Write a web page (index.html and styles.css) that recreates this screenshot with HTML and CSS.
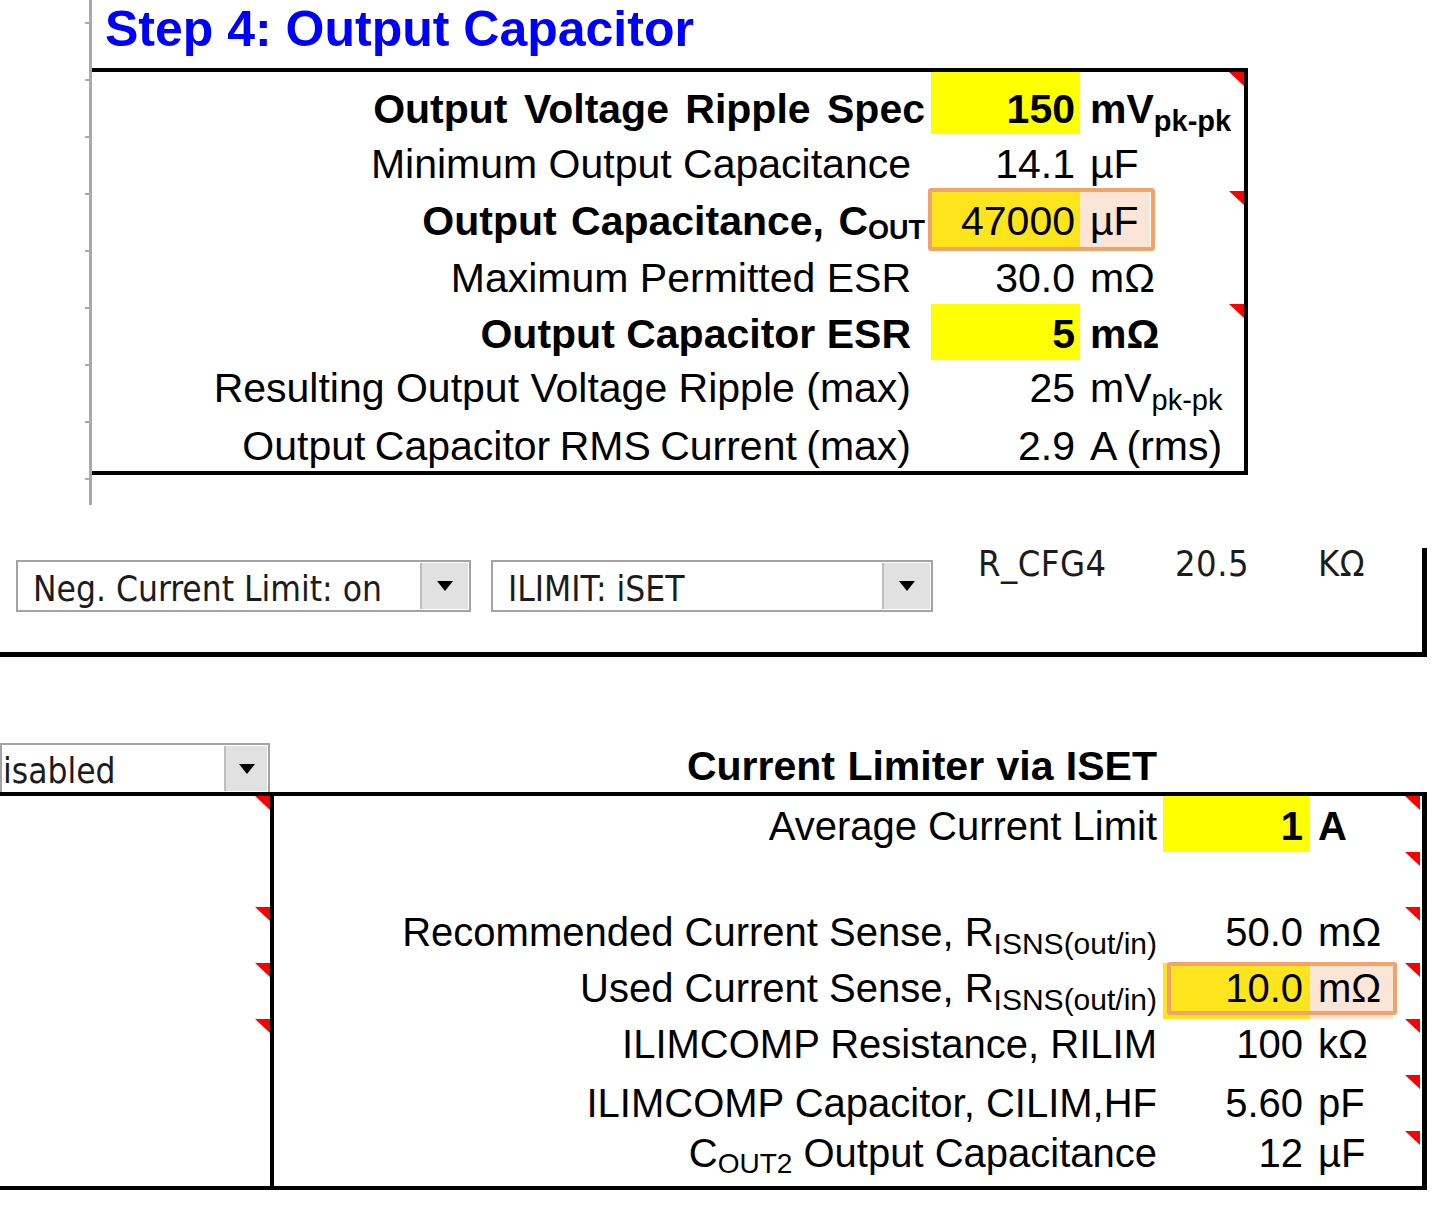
FILE: index.html
```html
<!DOCTYPE html>
<html lang="en">
<head>
<meta charset="utf-8">
<title>Output Capacitor</title>
<link rel="stylesheet" href="styles.css">
</head>
<body>
<section class="step">
  <div class="sheet">
    <h1 class="step-title">Step 4: Output Capacitor</h1>
    <div class="calc">
      <div class="row r1">
        <div class="lbl b wide">Output Voltage Ripple Spec</div>
        <div class="val in b">150</div>
        <div class="unit b">mV<span class="sub">pk-pk</span><i class="cm"></i></div>
      </div>
      <div class="row r2">
        <div class="lbl">Minimum Output Capacitance</div>
        <div class="val">14.1</div>
        <div class="unit">µF</div>
      </div>
      <div class="row r3">
        <div class="lbl b wide">Output Capacitance, C<span class="sc">OUT</span></div>
        <div class="val sel">47000</div>
        <div class="unit sel-tint">µF<i class="cm"></i></div>
        <span class="sel-box"></span>
      </div>
      <div class="row r4">
        <div class="lbl">Maximum Permitted ESR</div>
        <div class="val">30.0</div>
        <div class="unit">mΩ</div>
      </div>
      <div class="row r5">
        <div class="lbl b">Output Capacitor ESR</div>
        <div class="val in b">5</div>
        <div class="unit b">mΩ<i class="cm"></i></div>
      </div>
      <div class="row r6">
        <div class="lbl">Resulting Output Voltage Ripple (max)</div>
        <div class="val">25</div>
        <div class="unit">mV<span class="sub">pk-pk</span></div>
      </div>
      <div class="row r7">
        <div class="lbl">Output Capacitor RMS Current (max)</div>
        <div class="val">2.9</div>
        <div class="unit">A (rms)</div>
      </div>
    </div>
  </div>
</section>

<section class="cfg">
  <div class="dd dd-neg"><span class="dd-text">Neg. Current Limit: on</span><span class="dd-btn"></span></div>
  <div class="dd dd-ilim"><span class="dd-text">ILIMIT: iSET</span><span class="dd-btn"></span></div>
  <div class="params">
    <span>R_CFG4</span><span>20.5</span><span>KΩ</span>
  </div>
</section>

<section class="limiter">
  <div class="lim-head">
    <div class="dd dd-dis"><span class="dd-text">isabled</span><span class="dd-btn"></span></div>
    <h2 class="lim-title">Current Limiter via ISET</h2>
  </div>
  <div class="lim-box">
    <div class="lim-left">
      <div class="lrow"><i class="cm"></i></div>
      <div class="lrow"></div>
      <div class="lrow"><i class="cm"></i></div>
      <div class="lrow"><i class="cm"></i></div>
      <div class="lrow"><i class="cm"></i></div>
      <div class="lrow"></div>
      <div class="lrow"></div>
    </div>
    <div class="lim-main">
      <div class="row3 q1">
        <div class="lbl">Average Current Limit</div>
        <div class="val in b">1</div>
        <div class="unit b">A<i class="cm"></i></div>
      </div>
      <div class="row3 q2">
        <div class="lbl"></div>
        <div class="val"></div>
        <div class="unit"><i class="cm"></i></div>
      </div>
      <div class="row3 q3">
        <div class="lbl">Recommended Current Sense, R<span class="sub2">ISNS(out/in)</span></div>
        <div class="val">50.0</div>
        <div class="unit">mΩ<i class="cm"></i></div>
      </div>
      <div class="row3 q4">
        <div class="lbl">Used Current Sense, R<span class="sub2">ISNS(out/in)</span></div>
        <div class="val sel">10.0</div>
        <div class="unit sel-tint">mΩ<i class="cm"></i></div>
        <span class="sel-box"></span>
      </div>
      <div class="row3 q5">
        <div class="lbl">ILIMCOMP Resistance, RILIM</div>
        <div class="val">100</div>
        <div class="unit">kΩ<i class="cm"></i></div>
      </div>
      <div class="row3 q6">
        <div class="lbl">ILIMCOMP Capacitor, CILIM,HF</div>
        <div class="val">5.60</div>
        <div class="unit">pF<i class="cm"></i></div>
      </div>
      <div class="row3 q7">
        <div class="lbl">C<span class="sc2">OUT2</span> Output Capacitance</div>
        <div class="val">12</div>
        <div class="unit">µF<i class="cm"></i></div>
      </div>
    </div>
  </div>
</section>
</body>
</html>
```

FILE: styles.css
```css
* { box-sizing: border-box; }
html, body { margin: 0; padding: 0; background: #fff; }
body {
  width: 1441px;
  height: 1206px;
  overflow: hidden;
  font-family: "Liberation Sans", Arial, sans-serif;
  color: #000;
}

/* ---------- Section 1 ---------- */
.step {
  height: 505px;
  background-image: repeating-linear-gradient(to bottom, #a9a9a9 0 2px, transparent 2px 57px);
  background-size: 4px 100%;
  background-position: 85px 22px;
  background-repeat: no-repeat;
}
.sheet {
  margin-left: 89px;
  height: 505px;
  border-left: 3px solid #a9a9a9;
}
.step-title {
  margin: 0;
  height: 68px;
  padding: 1px 0 0 13px;
  font-size: 50px;
  line-height: 56px;
  font-weight: bold;
  color: #0000ff;
}
.calc {
  width: 1156px;
  border-top: 4px solid #000;
  border-right: 4px solid #000;
  border-bottom: 4px solid #000;
}
.row {
  position: relative;
  display: grid;
  grid-template-columns: 839px 149px 1fr;
  height: 57px;
  font-size: 41px;
}
.row > div { line-height: 46px; padding-top: 7px; white-space: nowrap; }
.row.r1 { height: 62px; }
.row.r1 > div { padding-top: 14px; }
.row.r4, .row.r5, .row.r6 { height: 56px; }
.row.r6 > div { padding-top: 5px; }
.row.r7 { height: 55px; }
.row .lbl { text-align: right; padding-right: 20px; }
.row .lbl.wide { padding-right: 6px; }
.row.r1 .lbl { word-spacing: 5px; }
.row.r3 .lbl { word-spacing: 3px; }
.row.r7 .lbl { word-spacing: -2px; }
.row .val { text-align: right; padding-right: 5px; }
.row .unit { position: relative; padding-left: 10px; }
.b { font-weight: bold; }
.in { background: #ffff00; }
.sel { background: #fde41c; }
.sel-tint { background: linear-gradient(to right, #fbe5d6 0 70px, transparent 70px); }
.sub { font-size: 29px; line-height: 0; vertical-align: -8px; }
.sc { font-size: 27px; line-height: 0; vertical-align: -4px; }
.row .sel-box {
  position: absolute;
  left: 836px;
  top: -3px;
  width: 227px;
  height: 63px;
  border: 4px solid #f1a46a;
  border-radius: 3px;
}
.cm {
  position: absolute;
  top: 0;
  right: 0;
  width: 15px;
  height: 14px;
  background: #ff0000;
  clip-path: polygon(0 0, 100% 0, 100% 100%);
}

/* ---------- Dropdowns ---------- */
.dd {
  display: flex;
  align-items: stretch;
  height: 52px;
  padding: 1px;
  border: 2px solid #a3a3a3;
  background: #fff;
}
.dd-text {
  flex: 1;
  padding-left: 14px;
  font-family: "DejaVu Sans Condensed", "DejaVu Sans", sans-serif;
  font-stretch: condensed;
  font-size: 35px;
  line-height: 52px;
  color: #1c1c1c;
  white-space: nowrap;
  overflow: hidden;
}
.dd-btn {
  width: 48px;
  display: flex;
  align-items: center;
  justify-content: center;
  background: #e1e1e1;
  border-left: 2px solid #bdbdbd;
}
.dd-btn::before {
  content: "";
  width: 0;
  height: 0;
  border-left: 8px solid transparent;
  border-right: 8px solid transparent;
  border-top: 10px solid #000;
}

/* ---------- Section 2 ---------- */
.cfg {
  margin-top: 43px;
  width: 1427px;
  height: 109px;
  display: flex;
  align-items: flex-start;
  border-right: 5px solid #000;
  border-bottom: 5px solid #000;
}
.dd-neg { margin: 12px 0 0 16px; width: 455px; }
.dd-ilim { margin: 12px 0 0 20px; width: 442px; }
.params {
  margin-left: 45px;
  display: grid;
  grid-template-columns: 197px 143px auto;
  font-family: "DejaVu Sans Condensed", "DejaVu Sans", sans-serif;
  font-stretch: condensed;
  font-size: 36px;
  letter-spacing: 0.5px;
  line-height: 32px;
  color: #1c1c1c;
}

/* ---------- Section 3 ---------- */
.limiter {
  margin-top: 86px;
  width: 1427px;
}
.lim-head {
  display: grid;
  grid-template-columns: 270px 1fr;
  height: 49px;
}
.dd-dis { height: 49px; border-bottom: 0; }
.dd-dis .dd-text { padding-left: 0; line-height: 50px; }
.dd-dis .dd-btn { width: 43px; }
.lim-title {
  margin: 0;
  padding-right: 270px;
  text-align: right;
  font-size: 41px;
  line-height: 47px;
  font-weight: bold;
  word-spacing: 1px;
}
.lim-box {
  display: grid;
  grid-template-columns: 270px 1fr;
  border-top: 4px solid #000;
  border-bottom: 4px solid #000;
  border-right: 5px solid #000;
}
.lim-left { display: flex; flex-direction: column; }
.lrow { position: relative; height: 56px; }
.lrow:nth-child(2), .lrow:nth-child(7) { height: 55px; }
.lim-main { border-left: 4px solid #000; }
.row3 {
  position: relative;
  display: grid;
  grid-template-columns: 889px 147px 1fr;
  height: 56px;
  font-size: 40px;
}
.row3.q2, .row3.q7 { height: 55px; }
.row3 > div { line-height: 45px; padding-top: 8px; white-space: nowrap; }
.row3.q3 > div, .row3.q4 > div, .row3.q5 > div { padding-top: 3px; }
.row3.q6 > div { padding-top: 6px; }
.row3.q7 > div { padding-top: 0; }
.row3 .lbl { text-align: right; padding-right: 6px; }
.row3 .val { text-align: right; padding-right: 7px; }
.row3 .unit { position: relative; padding-left: 8px; }
.sub2 { font-size: 30px; line-height: 0; vertical-align: -8px; }
.sc2 { font-size: 28px; line-height: 0; vertical-align: -6px; }
.row3 .sel-box {
  position: absolute;
  left: 893px;
  top: -1px;
  width: 230px;
  height: 53px;
  border: 4px solid #f1a46a;
  border-radius: 3px;
}
.row3 .sel-tint { background: linear-gradient(to right, #fbe5d6 0 83px, transparent 83px); }
.row3 .cm { right: 2px; }
```
